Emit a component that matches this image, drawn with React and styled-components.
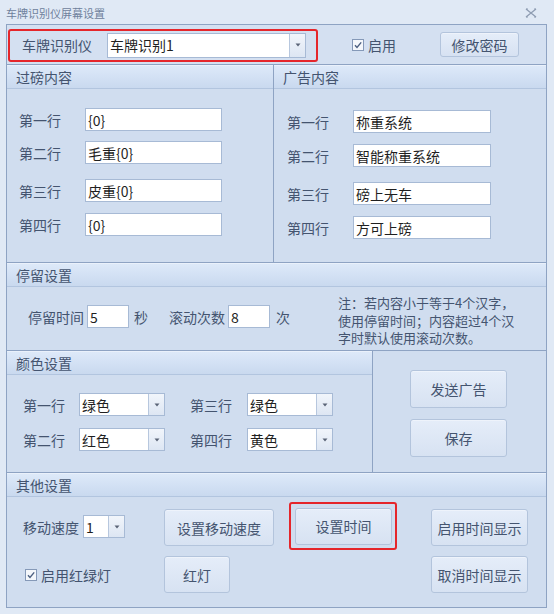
import React from 'react';
import styled, { createGlobalStyle } from 'styled-components';

const GlobalStyle = createGlobalStyle`
  html, body {
    margin: 0;
    padding: 0;
  }
  body {
    font-family: "Noto Sans CJK SC", "Noto Sans", "Liberation Sans", sans-serif;
    background: #e0e9f5;
  }
  * {
    box-sizing: border-box;
  }
`;

const Window = styled.div`
  width: 554px;
  height: 614px;
  background: #e0e9f5;
  display: flex;
  flex-direction: column;
`;

const TitleBar = styled.div`
  height: 24px;
  display: flex;
  align-items: center;
  justify-content: space-between;
  padding: 2px 17px 0 6px;
  font-size: 11px;
  color: #6f819c;
  line-height: 1;
`;

const Frame = styled.div`
  margin-left: 6px;
  width: 541px;
  height: 584px;
  border: 1px solid #8ea3c3;
  background: #d0ddef;
  display: flex;
  flex-direction: column;
  color: #44546f;
  font-size: 14px;
`;

const TopBar = styled.div`
  height: 40px;
  display: flex;
  align-items: center;
  padding-left: 1px;
  border-bottom: 1px solid #8ea3c3;
  background: #d4e0f1;
`;

const Highlight = styled.div`
  display: flex;
  align-items: center;
  gap: ${(p) => p.$gap || 0}px;
  width: ${(p) => p.$w}px;
  height: ${(p) => p.$h}px;
  padding-left: ${(p) => p.$pad || 0}px;
  border: 2px solid #e5262b;
  border-radius: 3px;
  margin-top: ${(p) => p.$mt || 0}px;
`;

const Label = styled.span`
  display: inline-block;
  width: ${(p) => (p.$w ? `${p.$w}px` : 'auto')};
  margin-left: ${(p) => p.$ml || 0}px;
  white-space: nowrap;
  line-height: 20px;
  color: #44546f;
`;

const TextBox = styled.input`
  width: ${(p) => p.$w}px;
  height: 23px;
  border: 1px solid #a7bad5;
  background: #fff;
  font-family: inherit;
  font-size: 14px;
  color: #1f1f1f;
  padding: 0 2px;
  margin: 0 0 0 ${(p) => p.$ml || 0}px;
  outline: none;
`;

const ComboBox = styled.div`
  width: ${(p) => p.$w}px;
  height: ${(p) => p.$h || 23}px;
  border: 1px solid #a7bad5;
  background: #fff;
  display: flex;
  margin-left: ${(p) => p.$ml || 0}px;
`;

const ComboText = styled.div`
  flex: 1;
  display: flex;
  align-items: center;
  padding-left: 2px;
  font-size: 14px;
  color: #1f1f1f;
  white-space: nowrap;
  overflow: hidden;
`;

const ComboArrow = styled.div`
  width: 16px;
  border-left: 1px solid #b7c7de;
  background: linear-gradient(#f1f5fb, #dde6f3);
  display: flex;
  align-items: center;
  justify-content: center;
`;

const Button = styled.div`
  width: ${(p) => p.$w}px;
  height: ${(p) => p.$h || 37}px;
  border: 1px solid #b3c4dc;
  border-radius: 3px;
  background: linear-gradient(#e5edf9, #d7e2f2);
  box-shadow: inset 0 1px 0 #eef3fb;
  display: flex;
  align-items: center;
  justify-content: center;
  color: #44546f;
  font-size: 14px;
  white-space: nowrap;
  margin-left: ${(p) => p.$ml || 0}px;
`;

const CheckWrap = styled.label`
  display: flex;
  align-items: center;
  gap: 4px;
  margin-left: ${(p) => p.$ml || 0}px;
  color: #44546f;
`;

const GroupsRow = styled.div`
  display: flex;
  height: ${(p) => p.$h}px;
  border-bottom: 1px solid #8ea3c3;
`;

const Group = styled.div`
  width: ${(p) => (p.$w ? `${p.$w}px` : 'auto')};
  flex: ${(p) => (p.$w ? 'none' : 1)};
  border-right: ${(p) => (p.$divider ? '1px solid #8ea3c3' : 'none')};
  display: flex;
  flex-direction: column;
`;

const GroupHeader = styled.div`
  height: 24px;
  flex: none;
  display: flex;
  align-items: center;
  padding-left: 9px;
  background: linear-gradient(#dde9f9, #c9d9ef);
  border-bottom: 1px solid #b2c5df;
  border-top: 1px solid #eaf1fb;
  color: #44546f;
  font-size: 14px;
`;

const FieldList = styled.div`
  padding-left: ${(p) => p.$pad}px;
`;

const FieldRow = styled.div`
  display: flex;
  align-items: center;
  height: 23px;
  margin-top: ${(p) => p.$mt}px;
`;

const StayBody = styled.div`
  flex: 1;
  display: flex;
  align-items: center;
  padding: 0 0 10px 21px;
`;

const Note = styled.div`
  margin-left: 48px;
  margin-top: 7px;
  font-size: 13px;
  line-height: 17.5px;
  color: #44546f;
`;

const ColorBody = styled.div`
  padding: 18px 0 0 16px;
  display: grid;
  grid-template-columns: 56px 86px 25px 57px 86px;
  grid-auto-rows: 23px;
  row-gap: 12px;
  align-items: center;
`;

const SidePanel = styled.div`
  flex: 1;
  display: flex;
  flex-direction: column;
  gap: 11px;
  padding: 19px 0 0 37px;
`;

const OtherBody = styled.div`
  flex: 1;
  display: flex;
  padding: 12px 0 0 16px;
`;

const Column = styled.div`
  width: ${(p) => p.$w}px;
  margin-left: ${(p) => p.$ml || 0}px;
  display: grid;
  grid-template-rows: 37px 37px;
  row-gap: 10px;
  align-items: center;
  align-content: start;
`;

const SpeedRow = styled.div`
  display: flex;
  align-items: center;
  margin-top: -2px;
`;

const RedFrame = styled.div`
  margin-left: 15px;
  margin-top: -7px;
  width: 108px;
  height: 48px;
  border: 2px solid #e5262b;
  border-radius: 3px;
  display: flex;
  align-items: center;
  justify-content: center;
  padding-left: 1px;
`;

const CloseIcon = () => (
  <svg width="12" height="10" viewBox="0 0 12 10">
    <path d="M1 1 L11 9 M11 1 L1 9" stroke="#8e9cb2" strokeWidth="1.3" fill="none" />
    <path d="M1 1 h2 M11 1 h-2 M1 9 h2 M11 9 h-2" stroke="#8e9cb2" strokeWidth="1" fill="none" />
  </svg>
);

const Arrow = () => (
  <svg width="6" height="4" viewBox="0 0 6 4">
    <path d="M0.5 0.5 L5.5 0.5 L3 3.5 Z" fill="#5a6477" />
  </svg>
);

const CheckIcon = () => (
  <svg width="12" height="12" viewBox="0 0 12 12">
    <rect x="0.5" y="0.5" width="11" height="11" fill="#f4f7fb" stroke="#8599b8" />
    <path d="M3 6.2 L5 8.4 L9.2 3.4" stroke="#4b5f80" strokeWidth="1.4" fill="none" />
  </svg>
);

const Combo = ({ value, w, h, ml }) => (
  <ComboBox $w={w} $h={h} $ml={ml}>
    <ComboText>{value}</ComboText>
    <ComboArrow>
      <Arrow />
    </ComboArrow>
  </ComboBox>
);

const scaleRows = [
  { label: '第一行', value: '{0}', mt: 19 },
  { label: '第二行', value: '毛重{0}', mt: 10 },
  { label: '第三行', value: '皮重{0}', mt: 15 },
  { label: '第四行', value: '{0}', mt: 11 },
];

const adRows = [
  { label: '第一行', value: '称重系统', mt: 21 },
  { label: '第二行', value: '智能称重系统', mt: 11 },
  { label: '第三行', value: '磅上无车', mt: 15 },
  { label: '第四行', value: '方可上磅', mt: 11 },
];

const App = () => {
  return (
    <Window>
      <GlobalStyle />
      <TitleBar>
        <span>车牌识别仪屏幕设置</span>
        <CloseIcon />
      </TitleBar>
      <Frame>
        <TopBar>
          <Highlight $w={310} $h={33} $pad={12} $gap={15} $mt={1}>
            <Label>车牌识别仪</Label>
            <Combo value="车牌识别1" w={199} h={25} />
          </Highlight>
          <CheckWrap $ml={34}>
            <CheckIcon />
            <span>启用</span>
          </CheckWrap>
          <Button $w={79} $h={25} $ml={44}>
            修改密码
          </Button>
        </TopBar>

        <GroupsRow $h={198}>
          <Group $w={267} $divider>
            <GroupHeader>过磅内容</GroupHeader>
            <FieldList $pad={12}>
              {scaleRows.map((r) => (
                <FieldRow key={r.label} $mt={r.mt}>
                  <Label $w={66}>{r.label}</Label>
                  <TextBox $w={137} defaultValue={r.value} readOnly />
                </FieldRow>
              ))}
            </FieldList>
          </Group>
          <Group>
            <GroupHeader>广告内容</GroupHeader>
            <FieldList $pad={13}>
              {adRows.map((r) => (
                <FieldRow key={r.label} $mt={r.mt}>
                  <Label $w={66}>{r.label}</Label>
                  <TextBox $w={138} defaultValue={r.value} readOnly />
                </FieldRow>
              ))}
            </FieldList>
          </Group>
        </GroupsRow>

        <GroupsRow $h={88}>
          <Group>
            <GroupHeader>停留设置</GroupHeader>
            <StayBody>
              <Label>停留时间</Label>
              <TextBox $w={42} $ml={3} defaultValue="5" readOnly />
              <Label $ml={5}>秒</Label>
              <Label $ml={21}>滚动次数</Label>
              <TextBox $w={42} $ml={3} defaultValue="8" readOnly />
              <Label $ml={6}>次</Label>
              <Note>
                注：若内容小于等于4个汉字，
                <br />
                使用停留时间；内容超过4个汉
                <br />
                字时默认使用滚动次数。
              </Note>
            </StayBody>
          </Group>
        </GroupsRow>

        <GroupsRow $h={122}>
          <Group $w={366} $divider>
            <GroupHeader>颜色设置</GroupHeader>
            <ColorBody>
              <Label>第一行</Label>
              <Combo value="绿色" w={86} />
              <span />
              <Label>第三行</Label>
              <Combo value="绿色" w={86} />
              <Label>第二行</Label>
              <Combo value="红色" w={86} />
              <span />
              <Label>第四行</Label>
              <Combo value="黄色" w={86} />
            </ColorBody>
          </Group>
          <SidePanel>
            <Button $w={97} $h={38}>
              发送广告
            </Button>
            <Button $w={97} $h={38}>
              保存
            </Button>
          </SidePanel>
        </GroupsRow>

        <Group>
          <GroupHeader>其他设置</GroupHeader>
          <OtherBody>
            <Column $w={141}>
              <SpeedRow>
                <Label>移动速度</Label>
                <Combo value="1" w={42} ml={4} />
              </SpeedRow>
              <CheckWrap $ml={2}>
                <CheckIcon />
                <span>启用红绿灯</span>
              </CheckWrap>
            </Column>
            <Column $w={110}>
              <Button $w={110}>设置移动速度</Button>
              <Button $w={66}>红灯</Button>
            </Column>
            <RedFrame>
              <Button $w={97}>设置时间</Button>
            </RedFrame>
            <Column $w={97} $ml={34}>
              <Button $w={97}>启用时间显示</Button>
              <Button $w={97}>取消时间显示</Button>
            </Column>
          </OtherBody>
        </Group>
      </Frame>
    </Window>
  );
};

export default App;
